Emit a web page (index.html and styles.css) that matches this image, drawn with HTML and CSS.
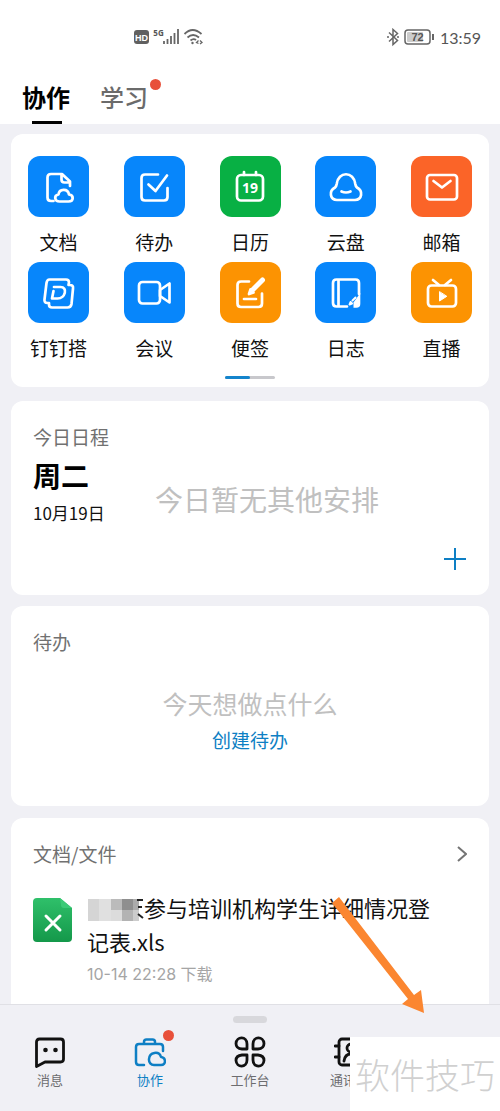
FILE: index.html
```html
<!DOCTYPE html>
<html lang="zh-CN">
<head>
<meta charset="utf-8">
<meta name="viewport" content="width=device-width, initial-scale=1">
<title>协作</title>
<link rel="stylesheet" href="styles.css">
</head>
<body>
<div class="page">
  <header class="header">
    <div class="status">
      <div class="status-left">
        <svg width="70" height="20" viewBox="0 0 70 20" fill="none" stroke="#666" stroke-width="1.8" aria-hidden="true">
          <rect x="0" y="2" width="15" height="14" rx="3" fill="#606060" stroke="none"/>
          <text x="7.500" y="12.500" class="hd">HD</text>
          <text x="24.500" y="8" class="fiveg">5G</text>
          <path d="M30 13v3M33.500 11v5M37 8v8M40.500 5v11M44 1v15"/>
          <path d="M50.500 6q8-8 17 0M53.500 9.500q5.500-5 11.500 0M56.500 12.500q3-2.500 5.500-.5"/>
          <circle cx="58.500" cy="15" r="1.200" fill="#666" stroke="none"/>
          <path d="M64.500 12.500l-2 2 2 1M66 12.500l2 2-2 1.500" stroke-width="1.300"/>
        </svg>
      </div>
      <div class="status-right">
        <svg width="48" height="20" viewBox="0 0 48 20" fill="none" stroke="#666" stroke-width="1.500" aria-hidden="true">
          <path d="M3 4.500l8.500 8-4.500 4V1.500l4.500 4-8.500 8M1 9h2M11 9h2"/>
          <rect x="19" y="2" width="25" height="14" rx="3"/>
          <rect x="21" y="4" width="16" height="10" rx="1" fill="#ccc" stroke="none"/>
          <text x="31.500" y="13" class="battery">72</text>
          <path d="M47 6v6" stroke-width="2"/>
        </svg>
        <time class="clock">13:59</time>
      </div>
    </div>
    <nav class="tabs" aria-label="频道">
      <a href="#work" class="tab tab-active">协作</a>
      <a href="#study" class="tab">学习<i class="dot tab-dot"></i></a>
    </nav>
  </header>

  <main class="main">
    <section class="card apps">
      <div class="app-grid">
        <a href="#doc" class="app"><span class="tile blue"><svg class="glyph" viewBox="0 0 36 36"><path d="M12.500 32H10q-3.500 0-3.500-3.500v-20Q6.500 5 10 5h11l8 7.500V17M20.500 5.500v5q0 3 3 3h5"/><path d="M18.500 32.500h9c5.500 0 5.500-6.500.5-7-1-6.500-10-6-10.500 0-5 1-4 7 1 7z"/></svg></span><span class="app-name">文档</span></a>
        <a href="#todo" class="app"><span class="tile blue"><svg class="glyph" viewBox="0 0 36 36"><path d="M22 5.500H9q-3.500 0-3.500 3.500v19q0 3.500 3.500 3.500h19q3.500 0 3.500-3.500v-9M12.500 15.500l7 6.500L31 6.500"/></svg></span><span class="app-name">待办</span></a>
        <a href="#calendar" class="app"><span class="tile green"><svg class="glyph" viewBox="0 0 36 36"><rect x="5" y="6" width="26" height="25.500" rx="4"/><path d="M12 3v3M24 3v3"/><text x="18" y="24" class="cal-day">19</text></svg></span><span class="app-name">日历</span></a>
        <a href="#drive" class="app"><span class="tile blue"><svg class="glyph" viewBox="0 0 36 36"><path d="M9 31h18c7 0 8.500-9 2-12.500-1-1-1.500-2-1.700-3.500C26 2 10 2 8.700 15c-.2 1.500-.7 2.500-1.700 3.500C.5 22 2 31 9 31z"/><path d="M13.500 22.500q4.500 2 9 0"/></svg></span><span class="app-name">云盘</span></a>
        <a href="#mail" class="app"><span class="tile coral"><svg class="glyph" viewBox="0 0 36 36"><rect x="3" y="6" width="30" height="24.500" rx="3"/><path d="M9.500 12l8.500 6.500 8.500-6.500"/></svg></span><span class="app-name">邮箱</span></a>
        <a href="#build" class="app"><span class="tile blue"><svg class="glyph" viewBox="0 0 36 36"><path d="M8.500 4.500H25q3 0 3 3l-.5 2.500H29q3.500 0 3 3.500L30.500 29q-.5 3.500-4 3.500H11q-3 0-3-3V28H6.500Q3 28 3.500 24.500L5.500 8Q6 4.500 8.500 4.500z"/><path d="M13 12h6.500c7.500 0 5 11.500-3 11.500H11L12.500 16"/></svg></span><span class="app-name">钉钉搭</span></a>
        <a href="#meeting" class="app"><span class="tile blue"><svg class="glyph" viewBox="0 0 36 36"><rect x="3" y="7" width="21" height="21.500" rx="3.500"/><path d="M24 15l9.500-6.500v19L24 21z"/></svg></span><span class="app-name">会议</span></a>
        <a href="#note" class="app"><span class="tile orange"><svg class="glyph" viewBox="0 0 36 36"><path d="M17 6.500H9q-3.500 0-3.500 3.500v18.500Q5.500 32 9 32h17.500q3.500 0 3.500-3.500V18.500M12 24h12"/><path d="M21 14.500L30.500 5" stroke-width="5"/><path d="M17 19l1.500-4.500 3 3z" fill="#fff"/></svg></span><span class="app-name">便签</span></a>
        <a href="#log" class="app"><span class="tile blue"><svg class="glyph" viewBox="0 0 36 36"><path d="M31 19V8q0-3.500-3.500-3.500h-19Q5 4.500 5 8v20q0 3.500 3.500 3.500H19M10.500 5v26"/><path d="M32.300 18v11q0 3.800-4 3.800h-2.800v-5.300z" fill="#fff" stroke="none"/><path d="M24.500 25.500l3-3" stroke-width="2"/><path d="M21.500 29.500l1-2.500 1.500 1.500z" stroke-width="2"/></svg></span><span class="app-name">日志</span></a>
        <a href="#live" class="app"><span class="tile orange"><svg class="glyph" viewBox="0 0 36 36"><rect x="4" y="10.500" width="28" height="21" rx="3.500"/><path d="M9 5l6 5M27 5l-6 5"/><path d="M15.500 17v9l7-4.500z" fill="#fff" stroke-width="1"/></svg></span><span class="app-name">直播</span></a>
      </div>
      <div class="pager"><i class="pager-on"></i></div>
    </section>

    <section class="card schedule">
      <div class="schedule-date">
        <h2 class="card-title">今日日程</h2>
        <p class="weekday">周二</p>
        <p class="date">10月19日</p>
      </div>
      <p class="schedule-empty">今日暂无其他安排</p>
      <button type="button" class="add" aria-label="新建日程"><svg width="22" height="22" viewBox="0 0 22 22"><path d="M11 0v22M0 11h22" stroke="#0e7fc4" stroke-width="2"/></svg></button>
    </section>

    <section class="card todo">
      <h2 class="card-title">待办</h2>
      <p class="todo-empty">今天想做点什么</p>
      <a href="#new" class="todo-create">创建待办</a>
    </section>

    <section class="card docs">
      <div class="docs-head">
        <h2 class="card-title">文档/文件</h2>
        <a href="#files" class="more" aria-label="更多"><svg width="10" height="16" viewBox="0 0 10 16" fill="none"><path d="M1 1l8 7-8 7" stroke="#747474" stroke-width="2"/></svg></a>
      </div>
      <a href="#file" class="file">
        <svg class="file-icon" width="39" height="44" viewBox="0 0 39 44" aria-hidden="true">
          <defs><linearGradient id="sheet" x1="0" y1="0" x2="0" y2="1"><stop offset="0" stop-color="#2fc06a"/><stop offset="1" stop-color="#14984a"/></linearGradient></defs>
          <path d="M4 0h23l12 10v30q0 4-4 4H4q-4 0-4-4V4q0-4 4-4z" fill="url(#sheet)"/>
          <path d="M27 0l12 10h-8q-3 0-3-3z" fill="#3cca77"/>
          <path d="M13 18l14 14M27 18L13 32" stroke="#fff" stroke-width="3" stroke-linecap="round"/>
        </svg>
        <span class="file-info">
          <span class="file-name"><svg class="mosaic" width="57" height="24" viewBox="0 0 57 24" shape-rendering="crispEdges" aria-hidden="true"><path d="M1 2h11v22H1z" fill="#d5d5d5"/><path d="M12 2h12v22H12z" fill="#e0e0e0"/><path d="M24 2h11v11H24z" fill="#bbb"/><path d="M24 13h11v11H24z" fill="#dcdcdc"/><path d="M35 2h11v11H35z" fill="#8f8f8f"/><path d="M35 13h11v11H35z" fill="#b3b3b3"/><path d="M46 2h6v11h-6z" fill="#ababab"/><path d="M46 13h6v11h-6z" fill="#ccc"/><path d="M50 3h6M51 10h4M51 17l5 4" stroke="#222" stroke-width="2" shape-rendering="auto"/></svg>参与培训机构学生详细情况登记表.xls</span>
          <span class="file-meta">10-14 22:28 下载</span>
        </span>
      </a>
    </section>
  </main>

  <nav class="tabbar" aria-label="主导航">
    <i class="handle"></i>
    <div class="tabbar-items">
      <a href="#msg" class="nav-item"><svg class="nav-icon" viewBox="0 0 32 32"><path d="M2.500 30.500V6q0-3 3-3h21q3 0 3 3v17q0 3-3 3H11z"/><circle cx="11.500" cy="14" r="2.300" class="eye"/><circle cx="21.500" cy="14" r="2.300" class="eye"/></svg><span class="nav-label">消息</span></a>
      <a href="#work" class="nav-item nav-active"><svg class="nav-icon" viewBox="0 0 32 32"><path d="M10 29H5q-3 0-3-3V11q0-3 3-3h21q3 0 3 3v4M10 8V6q0-2.500 2.500-2.500h6Q21 3.500 21 6v2"/><path d="M20 29h7c5.500 0 5-7.500 0-8-2-6.500-11.500-5-12 2-.3 3.500 2 6 5 6z"/></svg><span class="nav-label">协作</span><i class="dot nav-dot"></i></a>
      <a href="#desk" class="nav-item"><svg class="nav-icon" viewBox="0 0 32 32"><path d="M13 13H8q-6-.5-6-5.500C2.500 0 13 0 13 8zM19 13h5q6-.5 6-5.500C29.500 0 19 0 19 8zM13 19H8q-6 .5-6 5.500c.5 7.500 11 7.500 11-.5zM19 19h5q6 .5 6 5.500c-.5 7.500-11 7.500-11-.5z"/></svg><span class="nav-label">工作台</span></a>
      <a href="#contacts" class="nav-item" aria-label="通讯录"><svg class="nav-icon" viewBox="0 0 32 32"><rect x="5" y="3" width="25" height="26" rx="3"/><path d="M1 10h4M1 21h4M10 25q1-7 7-7t7 7"/><circle cx="17" cy="12" r="4"/></svg><span class="nav-label nav-label-cut">通讯</span></a>
    </div>
  </nav>

  <svg class="arrow" width="92" height="116" viewBox="0 0 92 116" aria-hidden="true"><path d="M7 0L82 98 89 93 92 116 70 107 76 102 0 6z" fill="#fb8630"/></svg>
  <div class="watermark">软件技巧</div>
</div>
</body>
</html>
```
FILE: styles.css
```css
* { box-sizing: border-box; }
body {
  margin: 0;
  font-family: "Noto Sans CJK SC", sans-serif;
  color: #111;
  background: #f0f0f5;
}
h2, p { margin: 0; font-weight: 400; }
a { color: inherit; text-decoration: none; }
i { display: block; }
.page {
  position: relative;
  display: flex;
  flex-direction: column;
  height: 100vh;
  overflow: hidden;
}

/* Header */
.header { flex: none; background: #fff; }
.status {
  display: flex;
  justify-content: space-between;
  padding: 28px 19px 0 134px;
  height: 76px;
}
.status-left, .status-right { display: flex; align-items: center; gap: 6px; height: 20px; }
.clock { font: 16px/20px Lato, sans-serif; color: #555; }
.hd { font: bold 9px "Liberation Sans", sans-serif; fill: #fff; stroke: none; text-anchor: middle; }
.fiveg { font: bold 8px "Open Sans", sans-serif; fill: #555; stroke: none; text-anchor: middle; }
.battery { font: bold 11px "Liberation Sans", sans-serif; fill: #555; stroke: none; text-anchor: middle; }
.tabs { display: flex; gap: 30px; padding: 0 22px; height: 48px; }
.tab {
  position: relative;
  font-size: 24px;
  line-height: 42px;
  font-weight: 500;
  color: #6b6b6b;
}
.tab-active { color: #000; font-weight: 700; }
.tab-active::after {
  content: "";
  position: absolute;
  left: 10px;
  right: 8px;
  bottom: 0;
  height: 3px;
  background: #000;
}
.dot { position: absolute; width: 11px; height: 11px; border-radius: 50%; background: #e8503a; }
.tab-dot { top: 3px; right: -13px; }

/* Cards */
.main { flex: 1; min-height: 0; overflow: hidden; padding: 10px 11px 0; }
.card { background: #fff; border-radius: 12px; margin-bottom: 12px; padding: 22px; }
.card-title { font-size: 19px; line-height: 28px; color: #717171; }

.apps { padding: 22px 17px 8px; margin-bottom: 14px; }
.app-grid {
  display: grid;
  grid-template-columns: repeat(5, 61px);
  justify-content: space-between;
  row-gap: 7px;
}
.app { display: flex; flex-direction: column; align-items: center; gap: 12px; }
.tile { display: grid; place-items: center; width: 61px; height: 61px; border-radius: 12px; }
.blue { background: #0786fb; }
.green { background: #08b044; }
.coral { background: #fb6428; }
.orange { background: #fc9302; }
.glyph {
  width: 36px;
  height: 36px;
  fill: none;
  stroke: #fff;
  stroke-width: 2.7;
  stroke-linejoin: round;
  stroke-linecap: round;
}
.cal-day { font: bold 14px "Open Sans", sans-serif; fill: #fff; stroke: none; text-anchor: middle; }
.app-name { font-size: 19px; line-height: 26px; white-space: nowrap; }
.pager { width: 50px; height: 3px; margin: 15px auto 0; border-radius: 2px; background: #c8c8cc; }
.pager-on { width: 50%; height: 3px; border-radius: 2px; background: #1484cc; }

.schedule {
  display: grid;
  grid-template-columns: 122px 1fr;
  grid-template-rows: 125px 22px;
  padding-bottom: 25px;
  margin-bottom: 11px;
}
.weekday { font-size: 28px; line-height: 48px; font-weight: 700; color: #000; }
.date { font-size: 17px; line-height: 28px; }
.schedule-empty { font-size: 28px; line-height: 42px; padding-top: 55px; color: #c0c0c0; }
.add { grid-column: 2; justify-self: end; width: 24px; height: 22px; padding: 0; border: 0; background: none; line-height: 0; cursor: pointer; }

.todo { display: flex; flex-direction: column; min-height: 200px; }
.todo-empty { margin-top: 27px; font-size: 25px; line-height: 40px; text-align: center; color: #c0c0c0; }
.todo-create { align-self: center; font-size: 19px; line-height: 34px; color: #0e7fc4; }

.docs { padding-bottom: 48px; }
.docs-head { display: flex; align-items: center; justify-content: space-between; }
.more { display: flex; }
.file { display: flex; gap: 15px; margin-top: 22px; }
.file-icon { flex: none; margin-top: 8px; }
.file-info { flex: 1; min-width: 0; padding-right: 30px; }
.file-name { display: block; font-size: 22px; line-height: 34px; }
.mosaic { display: inline-block; height: 24px; vertical-align: -4px; }
.file-meta { display: block; font-family: Inter, "Noto Sans CJK SC", sans-serif; font-size: 16px; line-height: 32px; color: #a5a5a5; }

/* Bottom bar */
.tabbar { flex: none; height: 107px; border-top: 1px solid #e0e0e5; background: #f0f0f5; }
.handle { width: 34px; height: 7px; margin: 11px auto 0; border-radius: 4px; background: #d8d8dc; }
.tabbar-items { display: grid; grid-template-columns: repeat(5, 1fr); padding-top: 13px; }
.nav-item {
  position: relative;
  display: flex;
  flex-direction: column;
  align-items: center;
  font-size: 13px;
  line-height: 24px;
  color: #6d6d70;
}
.nav-label-cut { width: 40px; }
.nav-icon { width: 32px; height: 32px; fill: none; stroke: #111; stroke-width: 2.8; stroke-linejoin: round; stroke-linecap: round; }
.eye { fill: #111; stroke: none; }
.nav-active { color: #0e7fc4; }
.nav-active .nav-icon { stroke: #0e7fc4; stroke-width: 2.5; }
.nav-dot { top: -6px; left: calc(50% + 13px); }

/* Overlays */
.arrow { position: absolute; right: 76px; bottom: 98px; }
.watermark {
  position: absolute;
  right: 0;
  bottom: 0;
  width: 150px;
  height: 74px;
  background: #fff;
  color: #d0d0d0;
  font-size: 35px;
  font-weight: 300;
  line-height: 74px;
  text-align: center;
}
```
